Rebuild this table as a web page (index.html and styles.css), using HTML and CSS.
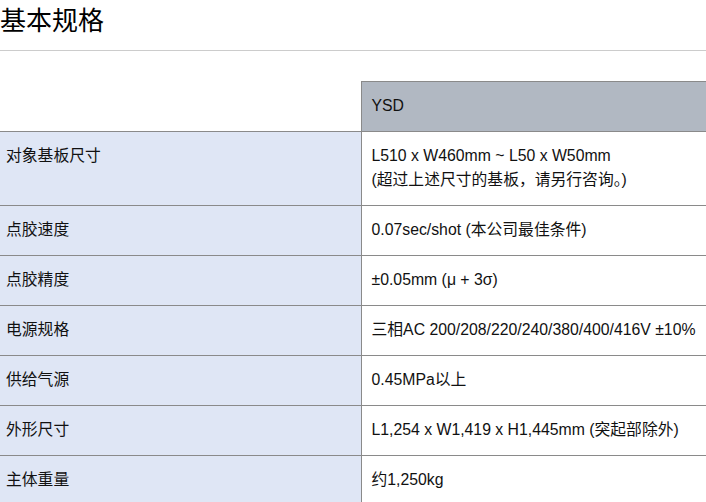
FILE: index.html
```html
<!DOCTYPE html>
<html lang="zh-CN">
<head>
<meta charset="utf-8">
<link rel="stylesheet" href="styles.css">
</head>
<body>
<h1 class="title">基本规格</h1>
<table class="spec">
  <colgroup>
    <col class="col-label">
    <col class="col-value">
  </colgroup>
  <thead>
    <tr>
      <th class="blank"></th>
      <th class="model">YSD</th>
    </tr>
  </thead>
  <tbody>
    <tr><th>对象基板尺寸</th><td>L510 x W460mm ~ L50 x W50mm<br>(超过上述尺寸的基板，请另行咨询。)</td></tr>
    <tr><th>点胶速度</th><td>0.07sec/shot (本公司最佳条件)</td></tr>
    <tr><th>点胶精度</th><td>±0.05mm (μ + 3σ)</td></tr>
    <tr><th>电源规格</th><td>三相AC 200/208/220/240/380/400/416V ±10%</td></tr>
    <tr><th>供给气源</th><td>0.45MPa以上</td></tr>
    <tr><th>外形尺寸</th><td>L1,254 x W1,419 x H1,445mm (突起部除外)</td></tr>
    <tr><th>主体重量</th><td>约1,250kg</td></tr>
  </tbody>
</table>
</body>
</html>
```

FILE: styles.css
```css
html, body {
  margin: 0;
  padding: 0;
  background: #ffffff;
}
body {
  font-family: "Liberation Sans", "Noto Sans CJK SC", sans-serif;
  color: #111;
  font-size: 15.8px;
  width: 706px;
  overflow: hidden;
}
.title {
  margin: 0 0 30px 0;
  font-size: 26px;
  font-weight: normal;
  line-height: 42px;
  padding-bottom: 8px;
  border-bottom: 1px solid #cccccc;
  color: #000;
}
.spec {
  border-collapse: collapse;
  width: 706px;
  table-layout: fixed;
}
.col-label {
  width: 361px;
}
.spec th, .spec td {
  font-weight: normal;
  text-align: left;
  vertical-align: top;
  line-height: 24px;
  padding: 12px 10px 13px 10px;
  border-bottom: 1px solid #8a8a8a;
  white-space: nowrap;
}
.spec tbody th {
  background: #dfe6f5;
  padding-left: 6px;
  border-right: 1px solid #8a8a8a;
}
.spec thead th.blank {
  background: #ffffff;
  border-right: 1px solid #8a8a8a;
}
.spec thead th.model {
  background: #b1b8c2;
  border-top: 1px solid #8a8a8a;
}
.spec td {
  background: #ffffff;
}
```
